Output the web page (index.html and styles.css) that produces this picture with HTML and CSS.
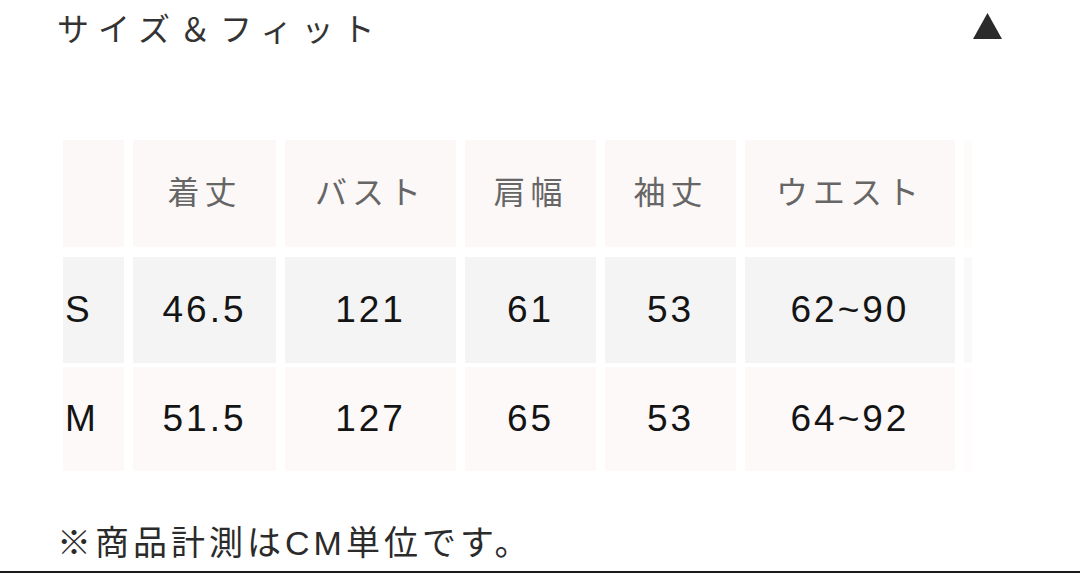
FILE: index.html
```html
<!DOCTYPE html>
<html lang="ja">
<head>
<meta charset="utf-8">
<title>サイズ＆フィット</title>
<link rel="stylesheet" href="styles.css">
</head>
<body>
<div class="page">
  <div class="titlebar">
    <h2 class="title">サイズ＆フィット</h2>
    <svg class="caret" width="29" height="26" viewBox="0 0 29 26"><polygon points="14.5,0 29,26 0,26" fill="#2b2b2b"/></svg>
  </div>
  <div class="table-wrap">
    <div class="table">
      <div class="row head">
        <div class="cell first"></div>
        <div class="cell">着丈</div>
        <div class="cell">バスト</div>
        <div class="cell">肩幅</div>
        <div class="cell">袖丈</div>
        <div class="cell">ウエスト</div>
        <div class="cell"></div>
      </div>
      <div class="row odd">
        <div class="cell first">S</div>
        <div class="cell">46.5</div>
        <div class="cell">121</div>
        <div class="cell">61</div>
        <div class="cell">53</div>
        <div class="cell">62~90</div>
        <div class="cell"></div>
      </div>
      <div class="row even">
        <div class="cell first">M</div>
        <div class="cell">51.5</div>
        <div class="cell">127</div>
        <div class="cell">65</div>
        <div class="cell">53</div>
        <div class="cell">64~92</div>
        <div class="cell"></div>
      </div>
    </div>
  </div>
  <p class="note">※商品計測はCM単位です。</p>
</div>
</body>
</html>
```

FILE: styles.css
```css
html, body {
  margin: 0;
  padding: 0;
  background: #ffffff;
}
.page {
  width: 1080px;
  height: 573px;
  display: flex;
  flex-direction: column;
  font-family: "Liberation Sans", "Noto Sans CJK JP", sans-serif;
  border-bottom: 2px solid #1a1a1a;
  box-sizing: border-box;
}
.titlebar {
  height: 54px;
  display: flex;
  align-items: center;
  justify-content: space-between;
  padding: 0 78px 0 57px;
}
.title {
  margin: 0;
  font-family: "Noto Sans CJK JP", sans-serif;
  font-weight: 400;
  font-size: 32px;
  letter-spacing: 9px;
  line-height: 40px;
  color: #333333;
}
.caret {
  display: block;
  margin-top: -2px;
}
.table-wrap {
  margin: 86px 0 0 63px;
  width: 909px;
  overflow: hidden;
}
.table {
  display: flex;
  flex-direction: column;
  width: 960px;
}
.row {
  display: grid;
  grid-template-columns: 61px 143px 171px 131px 131px 210px 40px;
  column-gap: 9px;
}
.row.head {
  height: 107px;
  margin-bottom: 10px;
}
.row.odd {
  height: 106px;
  margin-bottom: 4px;
}
.row.even {
  height: 104px;
}
.cell {
  display: flex;
  align-items: center;
  justify-content: center;
  font-size: 37px;
  letter-spacing: 3px;
  color: #141414;
}
.cell.first {
  justify-content: flex-start;
  padding-left: 2px;
}
.head .cell {
  background: #fdf8f8;
  font-family: "Noto Sans CJK JP", sans-serif;
  font-size: 32px;
  letter-spacing: 5px;
  color: #666666;
  padding-bottom: 7px;
  box-sizing: border-box;
}
.odd .cell {
  background: #f4f4f4;
}
.even .cell {
  background: #fdf9f9;
}
.row .cell:last-child {
  opacity: 0.5;
}
.note {
  margin: 52px 0 0 57px;
  font-family: "Liberation Sans", "Noto Sans CJK JP", sans-serif;
  font-size: 34px;
  line-height: 40px;
  letter-spacing: 4px;
  color: #2b2b2b;
}
```
